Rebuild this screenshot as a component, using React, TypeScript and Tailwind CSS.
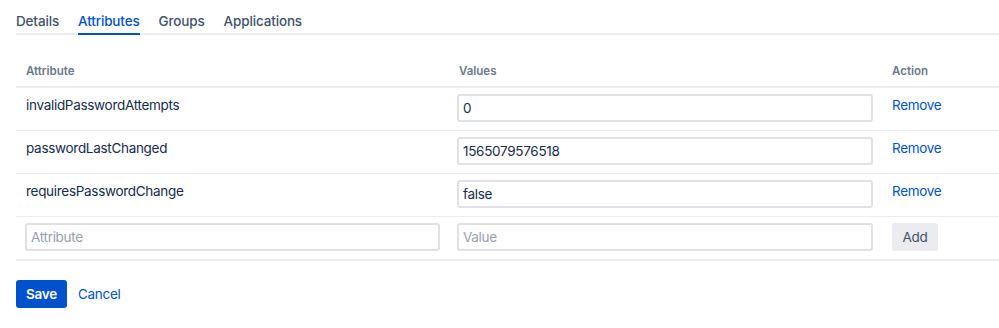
import React from 'react';

const rows = [
  { name: 'invalidPasswordAttempts', value: '0' },
  { name: 'passwordLastChanged', value: '1565079576518' },
  { name: 'requiresPasswordChange', value: 'false' },
];

const tabs = ['Details', 'Attributes', 'Groups', 'Applications'];

const inputCls =
  'w-full h-[28px] rounded-[3px] border-2 border-[#dfe1e6] bg-white px-[4px] text-[13.5px] tracking-[-0.3px] text-[#172b4d] placeholder:text-[#97a0af] outline-none';

const App: React.FC = () => {
  return (
    <div className="w-[999px] h-[328px] overflow-hidden bg-white pl-[16px] font-['Inter',sans-serif] text-[13.5px] tracking-[-0.3px] text-[#172b4d]">
      {/* Tabs */}
      <div className="flex gap-[19px] border-b-2 border-[#ebecf0] w-[1000px] h-[35px] pt-[12px] text-[13.5px] tracking-[-0.15px]">
        {tabs.map((t) => (
          <div
            key={t}
            className={
              t === 'Attributes'
                ? 'h-[23px] -mb-[2px] border-b-2 border-[#0052cc] text-[#0052cc] font-medium leading-[19px]'
                : 'h-[23px] text-[#42526e] font-medium leading-[19px]'
            }
          >
            {t}
          </div>
        ))}
      </div>

      {/* Table */}
      <div className="mt-[25px] w-[1000px]">
        <div className="grid grid-cols-[433px_433px_1fr] border-b-2 border-[#ebecf0] h-[28px] text-[11.5px] tracking-normal font-semibold text-[#6b778c]">
          <div className="pl-[10px] pt-[3px]">Attribute</div>
          <div className="pl-[10px] pt-[3px]">Values</div>
          <div className="pl-[10px] pt-[3px]">Action</div>
        </div>

        {rows.map((r) => (
          <div key={r.name} className="grid grid-cols-[433px_433px_1fr] h-[43px] border-b border-[#ebecf0]">
            <div className="pl-[10px] pt-[7px]">{r.name}</div>
            <div className="pl-[8px] pr-[9px] pt-[6px]">
              <input className={inputCls} defaultValue={r.value} />
            </div>
            <div className="pl-[10px] pt-[7px]">
              <a href="#" className="text-[#0052cc]">Remove</a>
            </div>
          </div>
        ))}

        <div className="grid grid-cols-[433px_433px_1fr] h-[44px] border-b-2 border-[#ebecf0]">
          <div className="pl-[9px] pr-[9px] pt-[6px]">
            <input className={inputCls} placeholder="Attribute" />
          </div>
          <div className="pl-[8px] pr-[9px] pt-[6px]">
            <input className={inputCls} placeholder="Value" />
          </div>
          <div className="pl-[10px] pt-[6px]">
            <button className="h-[28px] w-[46px] rounded-[3px] bg-[#ebecf0] text-[#42526e]">Add</button>
          </div>
        </div>
      </div>

      {/* Footer */}
      <div className="mt-[19px] flex items-center gap-[11px]">
        <button className="h-[28px] w-[51px] rounded-[3px] bg-[#0052cc] text-white font-semibold">Save</button>
        <a href="#" className="text-[#0052cc]">Cancel</a>
      </div>
    </div>
  );
};

export default App;
